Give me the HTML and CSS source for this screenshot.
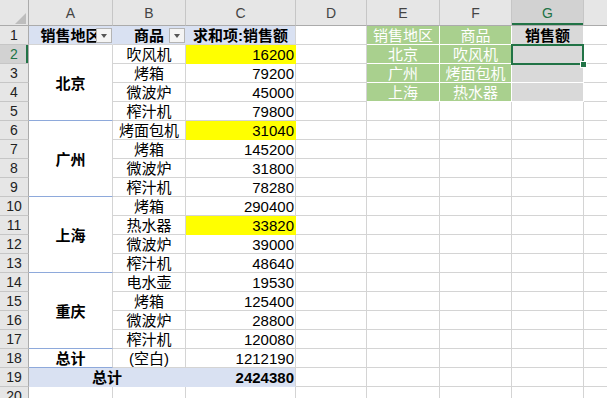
FILE: index.html
```html
<!DOCTYPE html>
<html lang="zh-CN">
<head>
  <meta charset="UTF-8">
  <title>销售额透视表</title>
  <link rel="stylesheet" href="styles.css">
</head>
<body>
<div class="sheet">
  <table class="grid">
    <colgroup>
      <col class="c-num"><col class="c-a"><col class="c-b"><col class="c-c"><col class="c-d">
      <col class="c-e"><col class="c-f"><col class="c-g"><col class="c-h">
    </colgroup>
    <thead>
      <tr class="col-heads">
        <th class="corner"><span class="corner-tri"></span></th>
        <th>A</th><th>B</th><th>C</th><th>D</th><th>E</th><th>F</th><th class="sel-col">G</th><th></th>
      </tr>
    </thead>
    <tbody>
      <tr>
        <th class="row-num">1</th>
        <td class="pv-head">销售地区<span class="filter-btn"></span></td>
        <td class="pv-head">商品<span class="filter-btn"></span></td>
        <td class="pv-head">求和项:销售额</td>
        <td></td>
        <td class="lookup">销售地区</td><td class="lookup">商品</td><td class="result head">销售额</td><td></td>
      </tr>
      <tr>
        <th class="row-num sel-row">2</th>
        <td class="region" rowspan="4">北京</td>
        <td class="item">吹风机</td><td class="num hl">16200</td>
        <td></td>
        <td class="lookup">北京</td><td class="lookup">吹风机</td><td class="result"></td><td></td>
      </tr>
      <tr>
        <th class="row-num">3</th>
        <td class="item">烤箱</td><td class="num">79200</td>
        <td></td>
        <td class="lookup">广州</td><td class="lookup">烤面包机</td><td class="result"></td><td></td>
      </tr>
      <tr>
        <th class="row-num">4</th>
        <td class="item">微波炉</td><td class="num">45000</td>
        <td></td>
        <td class="lookup">上海</td><td class="lookup">热水器</td><td class="result"></td><td></td>
      </tr>
      <tr>
        <th class="row-num">5</th>
        <td class="item">榨汁机</td><td class="num">79800</td>
        <td></td><td></td><td></td><td></td><td></td>
      </tr>
      <tr>
        <th class="row-num">6</th>
        <td class="region" rowspan="4">广州</td>
        <td class="item">烤面包机</td><td class="num hl">31040</td>
        <td></td><td></td><td></td><td></td><td></td>
      </tr>
      <tr>
        <th class="row-num">7</th>
        <td class="item">烤箱</td><td class="num">145200</td>
        <td></td><td></td><td></td><td></td><td></td>
      </tr>
      <tr>
        <th class="row-num">8</th>
        <td class="item">微波炉</td><td class="num">31800</td>
        <td></td><td></td><td></td><td></td><td></td>
      </tr>
      <tr>
        <th class="row-num">9</th>
        <td class="item">榨汁机</td><td class="num">78280</td>
        <td></td><td></td><td></td><td></td><td></td>
      </tr>
      <tr>
        <th class="row-num">10</th>
        <td class="region" rowspan="4">上海</td>
        <td class="item">烤箱</td><td class="num">290400</td>
        <td></td><td></td><td></td><td></td><td></td>
      </tr>
      <tr>
        <th class="row-num">11</th>
        <td class="item">热水器</td><td class="num hl">33820</td>
        <td></td><td></td><td></td><td></td><td></td>
      </tr>
      <tr>
        <th class="row-num">12</th>
        <td class="item">微波炉</td><td class="num">39000</td>
        <td></td><td></td><td></td><td></td><td></td>
      </tr>
      <tr>
        <th class="row-num">13</th>
        <td class="item">榨汁机</td><td class="num">48640</td>
        <td></td><td></td><td></td><td></td><td></td>
      </tr>
      <tr>
        <th class="row-num">14</th>
        <td class="region" rowspan="4">重庆</td>
        <td class="item">电水壶</td><td class="num">19530</td>
        <td></td><td></td><td></td><td></td><td></td>
      </tr>
      <tr>
        <th class="row-num">15</th>
        <td class="item">烤箱</td><td class="num">125400</td>
        <td></td><td></td><td></td><td></td><td></td>
      </tr>
      <tr>
        <th class="row-num">16</th>
        <td class="item">微波炉</td><td class="num">28800</td>
        <td></td><td></td><td></td><td></td><td></td>
      </tr>
      <tr>
        <th class="row-num">17</th>
        <td class="item">榨汁机</td><td class="num">120080</td>
        <td></td><td></td><td></td><td></td><td></td>
      </tr>
      <tr>
        <th class="row-num">18</th>
        <td class="region">总计</td>
        <td class="item">(空白)</td><td class="num">1212190</td>
        <td></td><td></td><td></td><td></td><td></td>
      </tr>
      <tr class="grand">
        <th class="row-num">19</th>
        <td class="grand-label" colspan="2">总计</td>
        <td class="num grand-num">2424380</td>
        <td></td><td></td><td></td><td></td><td></td>
      </tr>
      <tr>
        <th class="row-num">20</th>
        <td></td><td></td><td></td><td></td><td></td><td></td><td></td><td></td>
      </tr>
    </tbody>
  </table>

  <!-- active cell G2 -->
  <div class="cursor"><span class="fill-handle"></span></div>
</div>
</body>
</html>
```

FILE: styles.css
```css
* {
  box-sizing: border-box;
}

html, body {
  margin: 0;
  overflow: hidden;
  background: #fff;
}

body {
  font-family: "Liberation Sans", "Noto Sans CJK SC", sans-serif;
  font-size: 15px;
  color: #000;
}

.sheet {
  position: relative;
  width: 607px;
  height: 398px;
  overflow: hidden;
}

.grid {
  border-collapse: separate;
  border-spacing: 0;
  table-layout: fixed;
  width: 656px;
}

.c-num { width: 29px; }
.c-a { width: 84px; }
.c-b { width: 73px; }
.c-c { width: 110px; }
.c-d { width: 71px; }
.c-e { width: 73px; }
.c-f { width: 72px; }
.c-g { width: 72px; }
.c-h { width: 72px; }

.grid tr {
  height: 19px;
}

.grid td,
.grid th {
  padding: 1px 0 0;
  height: 19px;
  line-height: 17px;
  border-right: 1px solid #d4d4d4;
  border-bottom: 1px solid #d4d4d4;
  white-space: nowrap;
  overflow: hidden;
  font-weight: normal;
}

/* Headers */
.col-heads th {
  height: 26px;
  background: #e6e6e6;
  color: #444;
  font-size: 14px;
  text-align: center;
  vertical-align: middle;
  border-right-color: #c6c6c6;
  border-bottom-color: #ababab;
}

.col-heads .corner {
  position: relative;
  border-right-color: #ababab;
}

.corner-tri {
  position: absolute;
  right: 2px;
  bottom: 1px;
  width: 0;
  height: 0;
  border-left: 11px solid transparent;
  border-bottom: 11px solid #bdbdbd;
}

.col-heads .sel-col {
  background: #d2d2d2;
  color: #217346;
  box-shadow: inset 0 -2px 0 #217346;
}

.grid .row-num {
  background: #e6e6e6;
  color: #222;
  font-size: 14px;
  text-align: center;
  border-right-color: #ababab;
  border-bottom-color: #c6c6c6;
}

.grid .sel-row {
  background: #d2d2d2;
  color: #217346;
  box-shadow: inset -2px 0 0 #217346;
}

/* Pivot table */
.grid .pv-head {
  position: relative;
  background: #d9e1f2;
  font-weight: bold;
  text-align: center;
  border-right-color: #d9e1f2;
}

.grid .pv-head:nth-child(4) {
  border-right-color: #d4d4d4;
}

.filter-btn {
  position: absolute;
  top: 2px;
  right: 0;
  width: 16px;
  height: 15px;
  background: #f4f4f4;
  border: 1px solid #b4b4b4;
}

.filter-btn::after {
  content: "";
  position: absolute;
  left: 4px;
  top: 5px;
  border-left: 3.5px solid transparent;
  border-right: 3.5px solid transparent;
  border-top: 4px solid #555;
}

.grid .region {
  font-weight: bold;
  text-align: center;
  vertical-align: middle;
  border-bottom-color: #8ea9db;
}

.item {
  text-align: center;
}

.num {
  text-align: right;
  padding-right: 1px !important;
}

.grid .hl {
  background: #ffff00;
  border-right-color: #ffff00;
  border-bottom-color: #ffff00;
}

.grand td {
  font-weight: bold;
}

.grid .grand-label,
.grid .grand-num {
  background: #d9e1f2;
  text-align: center;
  border-right-color: #d9e1f2;
  border-bottom-color: #d9e1f2;
}

.grid .grand-num {
  text-align: right;
  border-right-color: #d4d4d4;
}

/* Lookup block */
.grid .lookup {
  background: #a9d08e;
  color: #fff;
  text-align: center;
  border-right-color: #fff;
  border-bottom-color: #fff;
}

.grid .result {
  background: #d9d9d9;
  border-right-color: #fff;
  border-bottom-color: #fff;
}

.grid .result.head {
  font-weight: bold;
  text-align: center;
}

/* Active cell */
.cursor {
  position: absolute;
  left: 511px;
  top: 44px;
  width: 73px;
  height: 21px;
  border: 2px solid #217346;
}

.fill-handle {
  position: absolute;
  right: -5px;
  bottom: -5px;
  width: 7px;
  height: 7px;
  background: #217346;
  border: 1px solid #fff;
}
```
